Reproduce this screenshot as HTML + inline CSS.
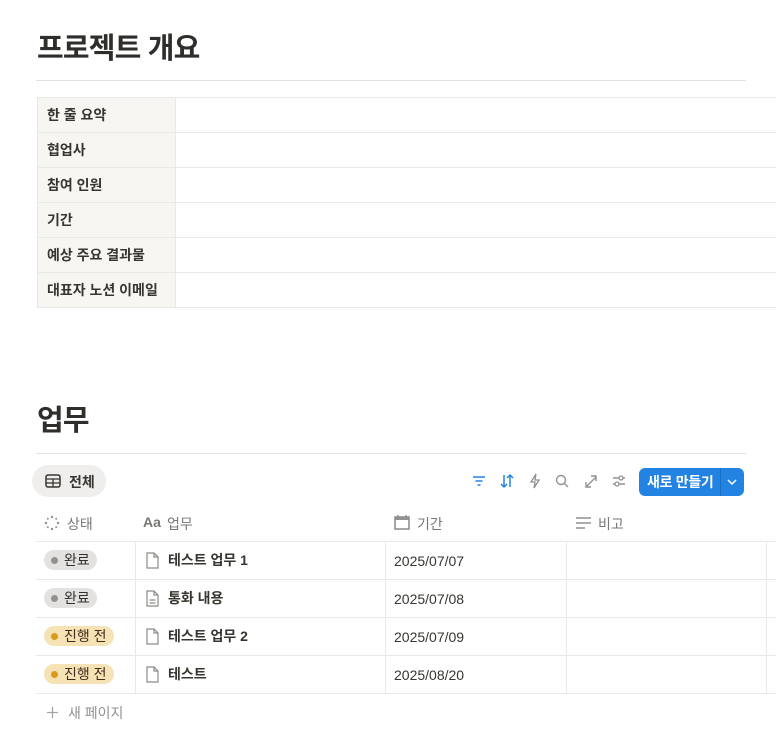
<!DOCTYPE html>
<html><head><meta charset="utf-8"><style>
*{margin:0;padding:0;box-sizing:border-box}
body{width:776px;height:750px;overflow:hidden;background:#fff;font-family:"Liberation Sans","Noto Sans CJK KR",sans-serif;color:#37352f;position:relative}
.a{position:absolute}
h1{position:absolute;font-size:29px;font-weight:700;color:#2f2e2b;letter-spacing:-0.8px}
.hr{position:absolute;height:1px;background:#e3e2e0}
.pt{position:absolute;left:37px;width:760px;border-top:1px solid #e9e9e7}
.prow{position:absolute;left:37px;width:760px;height:35px;border-bottom:1px solid #e9e9e7}
.prow .k{position:absolute;left:0;top:0;width:139px;height:34px;background:#f7f6f3;border-right:1px solid #e9e9e7;border-left:1px solid #e9e9e7;font-size:14px;font-weight:700;padding:7px 9px;color:#37352f}
.vl{position:absolute;width:1px;background:#e9e9e7}
.hl{position:absolute;left:36px;width:740px;height:1px;background:#e9e9e7}
.th{position:absolute;top:514px;font-size:14px;color:#787774}
.tag{position:absolute;left:44px;height:20px;border-radius:10px;font-size:14px;padding:0 7px 0 20px;line-height:20px}
.tag:before{content:"";position:absolute;left:7px;top:7px;width:7px;height:7px;border-radius:50%}
.done{background:#e3e2e0;color:#32302c}.done:before{background:#91918e}
.todo{background:#f5e3b5;color:#402c1b}.todo:before{background:#d99a1e}
.nm{position:absolute;left:168px;font-size:14px;font-weight:700;color:#37352f}
.dt{position:absolute;left:394px;font-size:14px;color:#37352f}
.doc{position:absolute;left:146px;width:13px;height:17px}
</style></head><body>
<h1 style="left:37px;top:25px">프로젝트 개요</h1>
<div class="hr" style="left:36px;top:80px;width:710px"></div>
<div class="pt" style="top:97px"></div>
<div class="prow" style="top:98px"><div class="k">한 줄 요약</div></div>
<div class="prow" style="top:133px"><div class="k">협업사</div></div>
<div class="prow" style="top:168px"><div class="k">참여 인원</div></div>
<div class="prow" style="top:203px"><div class="k">기간</div></div>
<div class="prow" style="top:238px"><div class="k">예상 주요 결과물</div></div>
<div class="prow" style="top:273px"><div class="k">대표자 노션 이메일</div></div>

<h1 style="left:37px;top:397px">업무</h1>
<div class="hr" style="left:36px;top:453px;width:710px"></div>
<div class="a" style="left:32px;top:465px;width:74px;height:32px;border-radius:16px;background:#efeeec;font-size:14px;font-weight:700;padding:7px 0 0 37px">전체</div>
<svg class="a" style="left:45px;top:474px" width="16" height="14" viewBox="0 0 16 14"><rect x="1" y="1" width="14" height="12" rx="2" fill="none" stroke="#37352f" stroke-width="1.5"/><path d="M1 5h14M1 9h14M8 5v8" stroke="#37352f" stroke-width="1.3"/></svg>
<svg class="a" style="left:470px;top:472px" width="160" height="18" viewBox="0 0 160 18">
<path d="M3 5h12M5.5 9h7M7.5 13h3" stroke="#2383e2" stroke-width="1.5" fill="none"/>
<path d="M34 3v12M31 12l3 3 3-3M40 15V3M37 6l3-3 3 3" stroke="#2383e2" stroke-width="1.5" fill="none"/>
<path d="M66 2l-5 8h4l-1 6 5-8h-4z" stroke="#91918e" stroke-width="1.3" fill="none"/>
<circle cx="91" cy="8" r="4.5" stroke="#91918e" stroke-width="1.4" fill="none"/><path d="M94.5 11.5l3.5 3.5" stroke="#91918e" stroke-width="1.4"/>
<path d="M116 15l10-10M121 4h5v5M116 10v5h5" stroke="#91918e" stroke-width="1.4" fill="none"/>
<path d="M143 6h12M143 12h12" stroke="#91918e" stroke-width="1.4"/><circle cx="151" cy="6" r="2" fill="#fff" stroke="#91918e" stroke-width="1.3"/><circle cx="147" cy="12" r="2" fill="#fff" stroke="#91918e" stroke-width="1.3"/>
</svg>
<div class="a" style="left:639px;top:468px;width:105px;height:28px;border-radius:6px;background:#2383e2;color:#fff;font-size:14px;font-weight:700;line-height:28px;padding-left:8px;letter-spacing:-0.3px">새로 만들기</div>
<div class="a" style="left:720px;top:468px;width:1px;height:28px;background:#1a6fc4"></div>
<svg class="a" style="left:726px;top:477px" width="12" height="10"><path d="M2 3l4 4 4-4" stroke="#fff" stroke-width="1.5" fill="none"/></svg>

<svg class="a" style="left:44px;top:515px" width="16" height="16" viewBox="0 0 16 16" fill="#91918e"><circle cx="8" cy="2" r="1.2"/><circle cx="8" cy="14" r="1.2"/><circle cx="2" cy="8" r="1.2"/><circle cx="14" cy="8" r="1.2"/><circle cx="3.8" cy="3.8" r="1"/><circle cx="12.2" cy="3.8" r="1"/><circle cx="3.8" cy="12.2" r="1"/><circle cx="12.2" cy="12.2" r="1"/></svg>
<div class="th" style="left:67px">상태</div>
<div class="th" style="left:143px;font-weight:700">Aa</div><div class="th" style="left:167px">업무</div>
<svg class="a" style="left:394px;top:515px" width="16" height="15"><rect x="1" y="2" width="14" height="12" fill="none" stroke="#91918e" stroke-width="1.6"/><rect x="1" y="2" width="14" height="3" fill="#91918e"/><path d="M4 0v3M12 0v3" stroke="#91918e" stroke-width="1.5"/></svg>
<div class="th" style="left:417px">기간</div>
<svg class="a" style="left:575px;top:516px" width="17" height="14"><path d="M1 2h15M1 7h15M1 12h9" stroke="#91918e" stroke-width="1.6"/></svg>
<div class="th" style="left:598px">비고</div>

<div class="hl" style="top:541px"></div><div class="hl" style="top:579px"></div><div class="hl" style="top:617px"></div><div class="hl" style="top:655px"></div><div class="hl" style="top:693px"></div>
<div class="vl" style="left:135px;top:541px;height:152px"></div>
<div class="vl" style="left:385px;top:541px;height:152px"></div>
<div class="vl" style="left:566px;top:541px;height:152px"></div>
<div class="vl" style="left:766px;top:541px;height:152px"></div>

<div class="tag done" style="top:550px">완료</div>
<div class="tag done" style="top:588px">완료</div>
<div class="tag todo" style="top:626px">진행 전</div>
<div class="tag todo" style="top:664px">진행 전</div>

<svg class="doc" style="top:552px" viewBox="0 0 13 17"><path d="M1 1h7l4 4v11H1z M8 1v4h4" fill="none" stroke="#8e8c88" stroke-width="1.2"/></svg>
<svg class="doc" style="top:590px" viewBox="0 0 13 17"><path d="M1 1h7l4 4v11H1z M8 1v4h4 M3.5 10h6M3.5 13h6" fill="none" stroke="#8e8c88" stroke-width="1.2"/></svg>
<svg class="doc" style="top:628px" viewBox="0 0 13 17"><path d="M1 1h7l4 4v11H1z M8 1v4h4" fill="none" stroke="#8e8c88" stroke-width="1.2"/></svg>
<svg class="doc" style="top:666px" viewBox="0 0 13 17"><path d="M1 1h7l4 4v11H1z M8 1v4h4" fill="none" stroke="#8e8c88" stroke-width="1.2"/></svg>
<div class="nm" style="top:550px">테스트 업무 1</div>
<div class="nm" style="top:588px">통화 내용</div>
<div class="nm" style="top:626px">테스트 업무 2</div>
<div class="nm" style="top:664px">테스트</div>
<div class="dt" style="top:553px">2025/07/07</div>
<div class="dt" style="top:591px">2025/07/08</div>
<div class="dt" style="top:629px">2025/07/09</div>
<div class="dt" style="top:667px">2025/08/20</div>

<svg class="a" style="left:46px;top:706px" width="13" height="13"><path d="M6.5 1v11M1 6.5h11" stroke="#a5a4a1" stroke-width="1.3"/></svg>
<div class="a" style="left:68px;top:703px;font-size:14px;color:#91918e">새 페이지</div>
</body></html>
